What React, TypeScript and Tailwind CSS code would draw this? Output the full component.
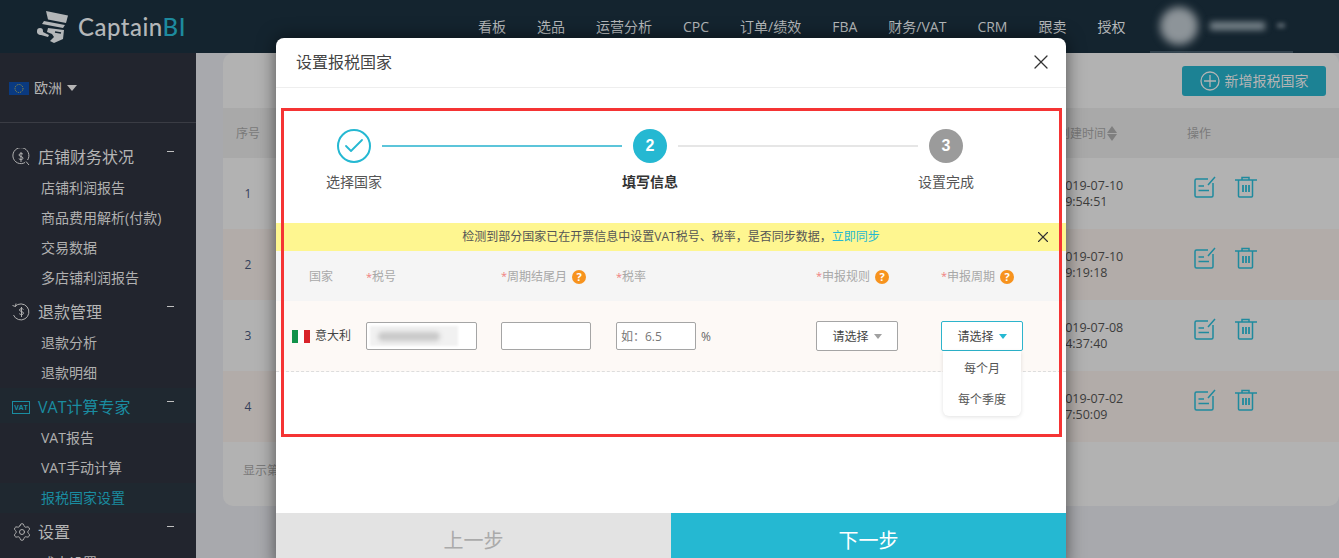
import { Check, Settings, X } from "lucide-react";

const cjk = "font-['Open_Sans','Noto_Sans_CJK_SC',sans-serif]";
const formCols = "grid grid-cols-[90px_135px_115px_200px_125px_1fr]";
const tableCols = "grid grid-cols-[835px_129px_1fr]";

const navItems = ["看板", "选品", "运营分析", "CPC", "订单/绩效", "FBA", "财务/VAT", "CRM", "跟卖", "授权"];

const rows = [
  { no: 1, date: "2019-07-10", time: "09:54:51" },
  { no: 2, date: "2019-07-10", time: "09:19:18" },
  { no: 3, date: "2019-07-08", time: "14:37:40" },
  { no: 4, date: "2019-07-02", time: "17:50:09" },
];

const Caret = ({ className }: { className: string }) => (
  <svg viewBox="0 0 10 6" preserveAspectRatio="none" className={className}>
    <path d="M0 0h10L5 6z" fill="currentColor" />
  </svg>
);

const Help = () => (
  <span className="ml-[5px] flex h-[14px] w-[14px] items-center justify-center rounded-full bg-[#f7931e] text-[11px] font-bold leading-none text-white">
    ?
  </span>
);

const Star = () => <span className="text-[11px] text-[#f08080]">*</span>;

const Logo = () => (
  <svg viewBox="0 0 32 34" className="h-[34px] w-[32px] text-[#b4b7b9]">
    <path d="M9 1L31 5.500 29 13 11 9.500z" fill="currentColor" />
    <path d="M7 11L28 15 26 18 5 14z" fill="currentColor" />
    <path d="M11 18L27 20 26 29 17 33 13 31 17 27 15 24 10 22z" fill="currentColor" />
    <path d="M0 21a3 3 0 0 1 6 0v1l6 3-1 2-7-2a3.500 3.500 0 0 1-4-4z" fill="currentColor" />
    <path d="M18 22l6 1" stroke="#14242f" strokeWidth="1.500" />
  </svg>
);

const MoneySearch = () => (
  <svg viewBox="0 0 18 18" fill="none" stroke="currentColor" className="h-[18px] w-[18px]">
    <path d="M13 14.500A8 8 0 1 1 15.600 12" strokeWidth="1" />
    <path d="M14 13.500l3 3.500" strokeWidth="1" />
    <path d="M11 6.200C10.500 5.400 7 5 7 7c0 2 4 1 4 3.200 0 1.900-3.500 1.500-4.200.5M9 4v10" strokeWidth="1" />
  </svg>
);

const MoneyBack = () => (
  <svg viewBox="0 0 18 18" fill="none" stroke="currentColor" className="h-[18px] w-[18px]">
    <path d="M3 3.500A8 8 0 1 1 1.500 12" strokeWidth="1" />
    <path d="M.5 2.500l3 1 .5-3" strokeWidth="1" />
    <path d="M11.500 6.500C11 5.500 7.500 5 7.500 7c0 2 4 1 4 3.200 0 1.900-3.500 1.500-4.200.5M9.500 4v10" strokeWidth="1" />
  </svg>
);

const VatIcon = () => (
  <span className="flex h-[13px] w-[18px] items-center justify-center border border-[#1a8ca0] text-[7px] font-bold leading-none text-[#1a8ca0]">
    VAT
  </span>
);

const EditIcon = () => (
  <svg viewBox="0 0 22 22" fill="none" stroke="#1f8a9e" strokeWidth="1.500" className="h-[22px] w-[22px]">
    <path d="M14 3H2.500A1.500 1.500 0 0 0 1 4.500v15A1.500 1.500 0 0 0 2.500 21h15a1.500 1.500 0 0 0 1.500-1.500V7" />
    <path d="M14 9l7-8M4.500 10H10M4.500 14.500H15" />
  </svg>
);

const TrashIcon = () => (
  <svg viewBox="0 0 22 22" fill="none" stroke="#1f8a9e" strokeWidth="1.500" className="h-[22px] w-[22px]">
    <path d="M0 4h22M7 4V1.500h7V4M3.500 4v16a1 1 0 0 0 1 1h12a1 1 0 0 0 1-1V4" />
    <path d="M8 9v7M11 9v7M14 9v7" strokeWidth="1.800" />
  </svg>
);

const PlusCircle = () => (
  <svg viewBox="0 0 20 20" fill="none" stroke="#b4b4b4" strokeWidth="1.300" className="h-5 w-5">
    <circle cx="10" cy="10" r="9" />
    <path d="M10 4v12M4 10h12" />
  </svg>
);

const SideGroup = ({ icon, label, active }: { icon: React.ReactNode; label: string; active?: boolean }) => (
  <div className={`flex h-[35px] items-center pl-[12px] pr-[22px] pt-[3px] text-base ${active ? "bg-[#1f2830] text-[#1a8ca0]" : "text-[#b5b5b5]"}`}>
    <span className="flex w-[26px] items-center text-[#b0b0b0]">{icon}</span>
    <span className="flex-1">{label}</span>
    <span className="mb-[12px] h-px w-[7px] bg-[#c0c0c0]" />
  </div>
);

const SideItem = ({ label, active }: { label: string; active?: boolean }) => (
  <div className={`flex h-[30px] items-center pl-[41px] text-sm ${active ? "bg-[#1f2830] text-[#1a8ca0]" : "text-[#b0b0b0]"}`}>{label}</div>
);

const Step = ({ label, strong, children, circle }: { label: string; strong?: boolean; children: React.ReactNode; circle: string }) => (
  <div className="flex w-[80px] flex-col items-center">
    <div className={`flex h-[34px] w-[34px] items-center justify-center rounded-full font-['Liberation_Sans',sans-serif] text-base font-bold text-white ${circle}`}>{children}</div>
    <div className={`mt-[9px] whitespace-nowrap text-sm ${strong ? "font-bold text-[#333]" : "text-[#555]"}`}>{label}</div>
  </div>
);

const Sidebar = () => (
  <aside className="w-[196px] shrink-0 overflow-hidden bg-[#22252e]">
    <div className="flex h-[70px] items-center border-b border-[#3a3c44] pl-[9px] pr-[2px] pt-[1px]">
      <svg viewBox="0 0 20 13" className="h-[13px] w-5">
        <rect width="20" height="13" fill="#0a3a80" />
        <circle cx="10" cy="6.500" r="4" fill="none" stroke="#a49a3a" strokeWidth="1" strokeDasharray="1 1" />
      </svg>
      <span className="ml-[5px] text-sm text-[#b5b5b5]">欧洲</span>
      <Caret className="ml-[5px] h-[6px] w-[10px] text-[#b5b5b5]" />
    </div>
    <div className="pt-[15px]">
      <SideGroup icon={<MoneySearch />} label="店铺财务状况" />
      <SideItem label="店铺利润报告" />
      <SideItem label="商品费用解析(付款)" />
      <SideItem label="交易数据" />
      <SideItem label="多店铺利润报告" />
      <SideGroup icon={<MoneyBack />} label="退款管理" />
      <SideItem label="退款分析" />
      <SideItem label="退款明细" />
      <SideGroup icon={<VatIcon />} label="VAT计算专家" active />
      <SideItem label="VAT报告" />
      <SideItem label="VAT手动计算" />
      <SideItem label="报税国家设置" active />
      <SideGroup icon={<Settings size={20} strokeWidth={1.200} />} label="设置" />
      <SideItem label="成本设置" />
    </div>
  </aside>
);

const BackTable = () => (
  <main className="flex-1 overflow-hidden bg-[#a8a9ad] pl-[27px]">
    <div className="h-[453px] rounded-[10px] bg-[#b2b2b2]">
      <div className="flex h-[55px] items-center justify-end pr-[13px] pt-[1px]">
        <button className="flex h-[30px] w-[144px] items-center justify-center gap-[5px] rounded-[3px] bg-[#1c8294] text-sm text-[#b4b4b4]">
          <PlusCircle />
          新增报税国家
        </button>
      </div>
      <div className={`${tableCols} h-[50px] items-center bg-[#a9a9a9] pt-[1px] text-xs text-[#7a7a7a]`}>
        <span className="pl-[13px]">序号</span>
        <span className="flex items-center gap-px">
          创建时间
          <span className="flex flex-col gap-px text-[#7f7f7f]">
            <Caret className="h-[7px] w-[10px] rotate-180" />
            <Caret className="h-[7px] w-[10px]" />
          </span>
        </span>
        <span>操作</span>
      </div>
      {rows.map((row) => (
        <div key={row.no} className={`${tableCols} h-[71px] items-center text-[12.500px] leading-4 text-[#3c3c3c] ${row.no % 2 === 0 ? "bg-[#b2aca9]" : ""}`}>
          <span className="w-[50px] text-center text-xs text-[#34405a]">{row.no}</span>
          <span>
            {row.date}
            <br />
            {row.time}
          </span>
          <span className="flex gap-[19px] pb-[13px] pl-[7px]">
            <EditIcon />
            <TrashIcon />
          </span>
        </div>
      ))}
      <div className="pl-[20px] pt-[21px] text-xs text-[#7a7a7a]">显示第 1 至 4 项</div>
    </div>
  </main>
);

const Modal = () => (
  <div className="absolute left-[276px] top-[38px] flex h-[530px] w-[790px] flex-col overflow-hidden rounded-t-[8px] bg-white shadow-[0_0_18px_rgba(0,0,0,0.55)]">
    <div className="flex h-[50px] shrink-0 items-center justify-between border-b border-[#eeeeee] pb-[2px] pl-5 pr-[13px]">
      <span className="text-base text-[#444]">设置报税国家</span>
      <X size={24} strokeWidth={1.300} className="text-[#333]" />
    </div>

    <div className="relative flex h-[135px] shrink-0 items-start pl-[38px] pt-[41px]">
      <Step label="选择国家" circle="border-2 border-[#25b8d2] bg-white">
        <Check size={24} strokeWidth={1.800} className="text-[#25b8d2]" />
      </Step>
      <div className="mx-[-12px] mt-[16px] h-[2px] w-[240px] bg-[#5cc5da]" />
      <Step label="填写信息" strong circle="bg-[#25b8d2]">2</Step>
      <div className="mx-[-12px] mt-[16px] h-[2px] w-[240px] bg-[#e6e6e6]" />
      <Step label="设置完成" circle="bg-[#9b9b9b]">3</Step>
    </div>

    <div className="relative flex h-[28px] shrink-0 items-center justify-center bg-[#fef690] text-xs text-[#555]">
      <span>
        检测到部分国家已在开票信息中设置VAT税号、税率，是否同步数据，<span className="text-[#25b8d2]">立即同步</span>
      </span>
      <X size={18} strokeWidth={1.500} className="absolute right-[14px] text-[#333]" />
    </div>

    <div className={`${formCols} h-[50px] shrink-0 items-center bg-[#f5f5f5] pt-[1px] text-xs text-[#a8a8a8]`}>
      <span className="pl-[33px]">国家</span>
      <span><Star />税号</span>
      <span className="flex items-center"><Star />周期结尾月<Help /></span>
      <span><Star />税率</span>
      <span className="flex items-center"><Star />申报规则<Help /></span>
      <span className="flex items-center"><Star />申报周期<Help /></span>
    </div>

    <div className={`${formCols} h-[71px] shrink-0 items-center border-b border-dashed border-[#dddddd] bg-[#fdf9f6] text-xs text-[#444]`}>
      <span className="flex items-center pl-[16px]">
        <span className="flex h-[13px] w-[18px]">
          <span className="flex-1 bg-[#11924a]" />
          <span className="flex-1 bg-white" />
          <span className="flex-1 bg-[#d8232a]" />
        </span>
        <span className="ml-[5px]">意大利</span>
      </span>
      <div className="flex h-[28px] w-[111px] items-center rounded-[2px] border border-[#a5a5a5] bg-white pl-[3px]">
        <div className="flex h-5 w-[88px] items-center bg-[#f1f1f1] pl-[8px] blur-[1px]">
          <div className="h-[9px] w-[62px] rounded-full bg-[#c8c8c8] blur-[2px]" />
        </div>
      </div>
      <div className="h-[28px] w-[90px] rounded-[2px] border border-[#a5a5a5] bg-white" />
      <div className="flex items-center">
        <div className="flex h-[28px] w-[80px] items-center rounded-[2px] border border-[#a5a5a5] bg-white pl-[4px] pt-[2px] text-[#777]">如：6.5</div>
        <span className="ml-[5px] pt-[2px] text-[#666]">%</span>
      </div>
      <div className="flex h-[30px] w-[82px] items-center justify-center gap-[5px] rounded-[2px] border border-[#a5a5a5] bg-white pt-[1px]">
        请选择
        <Caret className="h-[5px] w-2 text-[#a0a0a0]" />
      </div>
      <div className="relative">
        <div className="flex h-[30px] w-[82px] items-center justify-center gap-[5px] rounded-[2px] border border-[#2db4cc] bg-white pt-[1px]">
          请选择
          <Caret className="h-[5px] w-2 text-[#25b8d2]" />
        </div>
        <div className="absolute left-[2px] top-[30px] z-10 flex h-[65px] w-[78px] flex-col items-center rounded-b-[6px] bg-white pt-[2px] text-[#555] shadow-[0_1px_4px_rgba(0,0,0,0.12)]">
          <span className="flex h-[32px] items-center">每个月</span>
          <span className="flex h-[32px] items-center">每个季度</span>
        </div>
      </div>
    </div>

    <div className="flex-1" />

    <div className="flex h-[55px] shrink-0 text-xl">
      <div className="flex flex-1 items-center justify-center bg-[#e3e3e3] text-[#aaaaaa]">上一步</div>
      <div className="flex flex-1 items-center justify-center bg-[#25b8d2] text-white">下一步</div>
    </div>
  </div>
);

export default function App() {
  return (
    <div className={`relative flex h-[558px] w-[1339px] flex-col overflow-hidden ${cjk}`}>
      <header className="flex h-[53px] shrink-0 items-center bg-[#14242f]">
        <div className="ml-[37px] flex w-[441px] items-center">
          <Logo />
          <span className="ml-[9px] font-['Lato',sans-serif] text-[24px] font-medium leading-none tracking-[0.5px] text-[#b4b7b9]">
            Captain<span className="text-[#1d8a9e]">BI</span>
          </span>
        </div>
        <nav className="flex gap-[31px] text-sm text-[#b5b8ba]">
          {navItems.map((item) => (
            <span key={item}>{item}</span>
          ))}
        </nav>
        <div className="ml-[25px] flex h-full w-[143px] items-center border-b-2 border-[#33434e] pl-[10px]">
          <div className="h-[38px] w-[38px] rounded-full bg-[#8d9499] blur-[4px]" />
          <div className="ml-[12px] h-[8px] w-[55px] bg-[#7a858c] blur-[3px]" />
          <div className="ml-[12px] h-[5px] w-[8px] bg-[#56626b] blur-[2px]" />
        </div>
      </header>
      <div className="flex min-h-0 flex-1">
        <Sidebar />
        <BackTable />
      </div>
      <Modal />
      {/* red annotation box drawn over the screenshot */}
      <div className="pointer-events-none absolute left-[281px] top-[108px] h-[329px] w-[781px] border-[3px] border-[#f53434]" />
    </div>
  );
}
